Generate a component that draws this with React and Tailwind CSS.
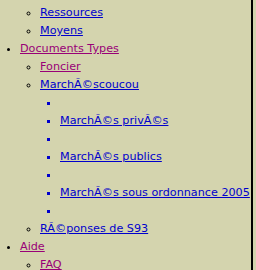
export default function App() {
  const blue = "text-[#0000cc] underline";
  const purple = "text-[#990077] underline";
  return (
    <div className="h-[270px] overflow-hidden bg-[#d4d4ae]">
      <div className="w-[253px] h-[270px] border-r-2 border-black overflow-hidden">
        <ul className="-mt-[14px] pl-[20px] list-disc text-[11.2px] leading-[18px] text-black" style={{ fontFamily: '"DejaVu Sans", Verdana, sans-serif' }}>
          <li>
            <ul className="pl-[20px] list-[circle]">
              <li><a className={blue}>Contacts</a></li>
              <li><a className={blue}>Ressources</a></li>
              <li><a className={blue}>Moyens</a></li>
            </ul>
          </li>
          <li>
            <a className={purple}>Documents Types</a>
            <ul className="pl-[20px] list-[circle]">
              <li><a className={purple}>Foncier</a></li>
              <li>
                <a className={blue}>MarchÃ©scoucou</a>
                <ul className="pl-[20px] list-[square] text-[#0000cc]">
                  <li>&nbsp;</li>
                  <li><a className={blue}>MarchÃ©s privÃ©s</a></li>
                  <li>&nbsp;</li>
                  <li><a className={blue}>MarchÃ©s publics</a></li>
                  <li>&nbsp;</li>
                  <li className="whitespace-nowrap"><a className={blue}>MarchÃ©s sous ordonnance 2005</a></li>
                  <li>&nbsp;</li>
                </ul>
              </li>
              <li><a className={blue}>RÃ©ponses de S93</a></li>
            </ul>
          </li>
          <li>
            <a className={purple}>Aide</a>
            <ul className="pl-[20px] list-[circle]">
              <li><a className={purple}>FAQ</a></li>
            </ul>
          </li>
        </ul>
      </div>
    </div>
  );
}
